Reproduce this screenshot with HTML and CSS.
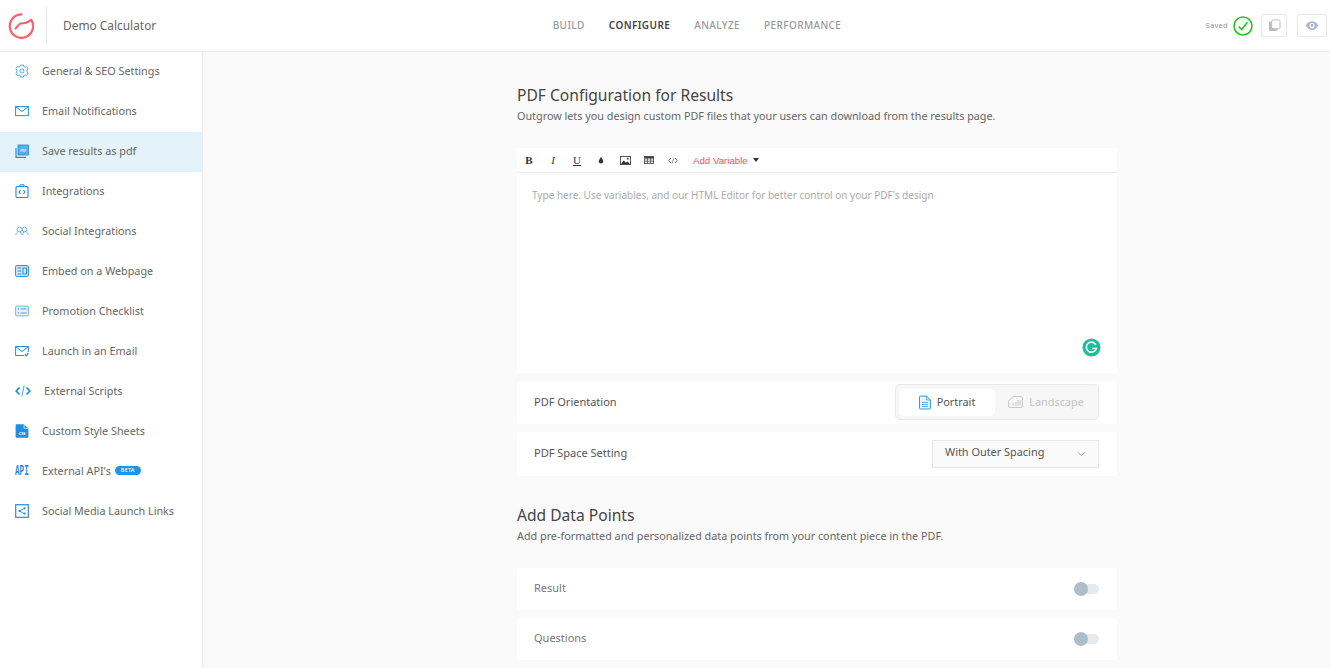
FILE: index.html
```html
<!DOCTYPE html>
<html lang="en">
<head>
<meta charset="utf-8">
<title>Demo Calculator</title>
<link rel="stylesheet" href="styles.css">
</head>
<body>
<header class="topbar">
  <div class="brand">
    <svg class="logo" viewBox="0 0 26 26" width="26" height="26"><path d="M13.500 1.400A11.700 11.700 0 1 0 23.300 6.800C21.800 7.600 19.800 9.800 17 10L12.500 10.500C10.500 11 9.300 14 7.500 15.500" fill="none" stroke="#f9616d" stroke-width="2.200" stroke-linecap="round" stroke-linejoin="round"/></svg>
    <span class="brand-name">Demo Calculator</span>
  </div>
  <nav class="tabs">
    <span class="tab">BUILD</span>
    <span class="tab tab-on">CONFIGURE</span>
    <span class="tab">ANALYZE</span>
    <span class="tab">PERFORMANCE</span>
  </nav>
  <div class="actions">
    <span class="saved">Saved</span>
    <svg viewBox="0 0 20 20" width="20" height="20"><circle cx="10" cy="10" r="9" fill="none" stroke="#1dc41d" stroke-width="1.500"/><path d="M5.800 10.600l3 3 5.600-7.400" fill="none" stroke="#1dc41d" stroke-width="1.600"/></svg>
    <span class="square sq1"><svg viewBox="0 0 14 14" width="13" height="13"><rect x="1" y="3" width="9" height="10" rx="1.500" fill="#bcbcbc"/><rect x="4" y="1" width="9" height="9.500" rx="1.500" fill="#fff" stroke="#bcbcbc"/></svg></span>
    <span class="square sq2"><svg viewBox="0 0 16 12" width="14" height="11"><path d="M8 1C4.500 1 2 3.500 .8 6 2 8.500 4.500 11 8 11s6-2.500 7.200-5C14 3.500 11.500 1 8 1z" fill="#a9b8c6"/><circle cx="8" cy="6" r="3" fill="#fff"/><circle cx="8" cy="6" r="1.700" fill="#a9b8c6"/></svg></span>
  </div>
</header>
<div class="shell">
  <aside class="sidebar">
    <a class="item"><svg class="ic" viewBox="0 0 14 14"><path d="M5.600 1h2.800l.4 1.500 1.400.6 1.500-.6 1.400 2.300-1 1.200v2l1 1.200-1.400 2.300-1.500-.6-1.400.6-.4 1.500H5.600l-.4-1.500-1.400-.6-1.500.6L.9 9.200l1-1.200V6L.9 4.800l1.400-2.300 1.500.6 1.400-.6z" fill="none" stroke="#3fa4ec" stroke-width=".9"/><circle cx="7" cy="7" r="2" fill="none" stroke="#3fa4ec" stroke-width=".9"/></svg><span>General &amp; SEO Settings</span></a>
    <a class="item"><svg class="ic" viewBox="0 0 14 14"><rect x=".6" y="2.600" width="12.800" height="9" fill="none" stroke="#1e8fe0" stroke-width="1"/><path d="M.8 2.800L7 7.500l6.200-4.700" fill="none" stroke="#1e8fe0" stroke-width="1"/></svg><span>Email Notifications</span></a>
    <a class="item item-on"><svg class="ic" viewBox="0 0 14 14"><path d="M1 4v9.300h10" fill="none" stroke="#1e8fe0" stroke-width="1.200"/><rect x="3" y="1" width="10.500" height="10" fill="#5aaeea" stroke="#1e8fe0" stroke-width=".8"/><text class="tiny" x="8.250" y="7.500" text-anchor="middle">PDF</text></svg><span>Save results as pdf</span></a>
    <a class="item"><svg class="ic" viewBox="0 0 14 14"><rect x="1" y="2.500" width="12" height="11" rx="1" fill="none" stroke="#1e8fe0" stroke-width="1.100"/><path d="M5 2.500V.8h4v1.700" fill="none" stroke="#1e8fe0"/><path d="M5.500 6.200L4 8l1.500 1.800M8.500 6.200L10 8 8.500 9.800" fill="none" stroke="#1e8fe0" stroke-width="1.100"/></svg><span>Integrations</span></a>
    <a class="item"><svg class="ic" viewBox="0 0 14 14"><circle cx="4.500" cy="5.500" r="2.300" fill="none" stroke="#3fa4ec" stroke-width=".8"/><circle cx="9.500" cy="5.500" r="2.300" fill="none" stroke="#3fa4ec" stroke-width=".8"/><path d="M.7 11c.5-2 1.500-3 2.500-3.200M6.400 11c-.2-1.500-.8-2.600-1.600-3.200M7.600 11c.2-1.500.8-2.600 1.600-3.200M13.300 11c-.5-2-1.500-3-2.500-3.200" fill="none" stroke="#3fa4ec" stroke-width=".8"/></svg><span>Social Integrations</span></a>
    <a class="item"><svg class="ic" viewBox="0 0 14 14"><rect x=".6" y="1.600" width="12.800" height="10.800" rx="1" fill="#d5ebfa" stroke="#1e8fe0" stroke-width="1"/><path d="M2.500 4h4M2.500 7h4M2.500 10h4" stroke="#1e8fe0"/><rect x="8" y="4" width="3.500" height="6" fill="none" stroke="#1e8fe0"/></svg><span>Embed on a Webpage</span></a>
    <a class="item"><svg class="ic" viewBox="0 0 14 14"><rect x=".6" y="2.100" width="12.800" height="9.800" rx="1" fill="#e4f2fc" stroke="#5db2ee" stroke-width=".9"/><path d="M2.500 5h1.500M5.500 5h6M2.500 9h1.500M5.500 9h6" stroke="#3fa4ec" stroke-width="1"/></svg><span>Promotion Checklist</span></a>
    <a class="item"><svg class="ic" viewBox="0 0 14 14"><path d="M9 11.500H.6V2.500h12.800V8" fill="none" stroke="#1e8fe0"/><path d="M.8 2.800L7 7.500l6.200-4.700" fill="none" stroke="#1e8fe0"/><path d="M9.800 10.500l1.300 1.300 2.300-2.800" fill="none" stroke="#1e8fe0" stroke-width="1.200"/></svg><span>Launch in an Email</span></a>
    <a class="item item-wide"><svg class="ic ic-wide" viewBox="0 0 16 14"><path d="M4.500 3.500L1.200 7l3.300 3.500M11.500 3.500L14.800 7l-3.300 3.500" fill="none" stroke="#1e8fe0" stroke-width="1.800"/><path d="M9.200 1.500L6.800 12.500" stroke="#1e8fe0" stroke-width=".8"/></svg><span>External Scripts</span></a>
    <a class="item"><svg class="ic" viewBox="0 0 14 14"><path d="M.6 1.200a1 1 0 0 1 1-1h7l4.800 4.400v8.200a1 1 0 0 1-1 1H1.600a1 1 0 0 1-1-1z" fill="#1e8fe0"/><path d="M9 .8v3.600h4" fill="none" stroke="#fff" stroke-width=".6"/><text class="tiny tiny-css" x="7" y="11" text-anchor="middle">CSS</text></svg><span>Custom Style Sheets</span></a>
    <a class="item"><span class="api-ic"><span class="api">API</span></span><span>External API's</span><b class="beta">BETA</b></a>
    <a class="item"><svg class="ic" viewBox="0 0 14 14"><rect x=".7" y=".7" width="12.600" height="12.600" fill="none" stroke="#1e8fe0" stroke-width="1.200"/><circle cx="4.500" cy="7" r="1.100" fill="#1e8fe0"/><circle cx="9.500" cy="4.300" r="1.100" fill="#1e8fe0"/><circle cx="9.500" cy="9.700" r="1.100" fill="#1e8fe0"/><path d="M4.500 7l5-2.700M4.500 7l5 2.700" stroke="#1e8fe0" stroke-width=".8"/></svg><span>Social Media Launch Links</span></a>
  </aside>
  <main class="main">
    <div class="col">
      <h2 class="h-first">PDF Configuration for Results</h2>
      <p class="sub">Outgrow lets you design custom PDF files that your users can download from the results page.</p>
      <section class="editor">
        <div class="toolbar">
          <b class="tool t-serif">B</b>
          <i class="tool t-serif">I</i>
          <u class="tool t-serif">U</u>
          <span class="tool"><svg viewBox="0 0 8 10" width="6" height="8"><path d="M4 .5C5 3 7 4.500 7 6.500a3 3 0 0 1-6 0C1 4.500 3 3 4 .5z" fill="#333"/></svg></span>
          <span class="tool"><svg viewBox="0 0 12 10" width="11" height="9"><rect x=".5" y=".5" width="11" height="9" fill="none" stroke="#444"/><path d="M1 9l3-4 2.500 2.500L8 6l3 3z" fill="#333"/><circle cx="8.500" cy="3" r="1" fill="#333"/></svg></span>
          <span class="tool"><svg viewBox="0 0 12 10" width="10" height="8"><rect x=".5" y=".5" width="11" height="9" fill="none" stroke="#444"/><path d="M.5 3.500h11M.5 6.500h11M4 .5v9M8 .5v9" stroke="#444"/><path d="M.5 1.500h11" stroke="#444" stroke-width="2"/></svg></span>
          <span class="tool"><svg viewBox="0 0 12 8" width="10" height="7"><path d="M3.500 1L1 4l2.500 3M8.500 1L11 4 8.500 7" fill="none" stroke="#444" stroke-width=".9"/><path d="M7 .5L5 7.500" stroke="#444" stroke-width=".7"/></svg></span>
          <span class="addvar">Add Variable</span><span class="caret"></span>
        </div>
        <div class="editor-body">
          <p class="placeholder">Type here. Use variables, and our HTML Editor for better control on your PDF's design</p>
          <svg class="grammarly" viewBox="0 0 20 20" width="19" height="19"><circle cx="10" cy="10" r="9.500" fill="#15c39a"/><path d="M14.600 7.300A5.300 5.300 0 1 0 15 11h-4.200" fill="none" stroke="#fff" stroke-width="1.700"/></svg>
        </div>
      </section>
      <div class="row row-orient">
        <span class="label">PDF Orientation</span>
        <div class="switcher">
          <span class="opt opt-on"><svg viewBox="0 0 12 14" width="12" height="15"><path d="M1.500.6h6l3.900 3.900v8a1 1 0 0 1-1 1h-8.900a1 1 0 0 1-1-1v-11a1 1 0 0 1 1-.9z" fill="#e9f4fc" stroke="#2d9ae8"/><path d="M7.500.6v3.900h3.900M3 7h6M3 9h6M3 11h6" fill="none" stroke="#2d9ae8" stroke-width=".8"/></svg><span class="opt-text">Portrait</span></span>
          <span class="opt opt-off"><svg viewBox="0 0 15 12" width="15" height="12"><path d="M5 .6h8a1.400 1.400 0 0 1 1.400 1.400v8a1.400 1.400 0 0 1-1.400 1.400H2A1.400 1.400 0 0 1 .6 10V5z" fill="none" stroke="#c5c5c5"/><path d="M8 6v3.500M10 4v5.500M12 4v5.500M5 7v2.500" stroke="#c5c5c5"/></svg><span class="opt-text">Landscape</span></span>
        </div>
      </div>
      <div class="row row-space">
        <span class="label">PDF Space Setting</span>
        <div class="select"><span class="select-text">With Outer Spacing</span><svg viewBox="0 0 10 6" width="9" height="6"><path d="M1 1l4 4 4-4" fill="none" stroke="#a5a5a5" stroke-width="1.100"/></svg></div>
      </div>
      <h2 class="h-second">Add Data Points</h2>
      <p class="sub">Add pre-formatted and personalized data points from your content piece in the PDF.</p>
      <div class="row row-toggle row-result"><span class="label label-soft">Result</span><span class="toggle"></span></div>
      <div class="row row-toggle"><span class="label label-soft">Questions</span><span class="toggle"></span></div>
    </div>
  </main>
</div>
</body>
</html>
```
FILE: styles.css
```css
* { box-sizing: border-box; }
html, body { margin: 0; height: 100%; overflow: hidden; }
body { font-family: "Noto Sans", "Open Sans", sans-serif; background: #fafafa; color: #555; }

.topbar { height: 52px; background: #fff; border-bottom: 1px solid #e9e9e9; display: grid; grid-template-columns: 1fr auto 1fr; align-items: center; }
.brand { display: flex; align-items: center; height: 100%; padding-left: 8px; }
.logo { display: block; }
.brand-name { margin-left: 12px; padding-left: 16px; border-left: 1px solid #e8e8e8; height: 37px; line-height: 37px; font-size: 11.900px; color: #666; }
.tabs { display: flex; gap: 24px; font-size: 10px; letter-spacing: .4px; font-weight: 500; color: #999; padding-left: 64px; margin-bottom: 2px; }
.tab-on { color: #444; font-weight: 600; }
.actions { display: flex; justify-content: flex-end; align-items: center; padding-right: 3px; }
.saved { font-size: 7.500px; color: #999; letter-spacing: .3px; margin-right: 5px; margin-bottom: 2px; }
.square { width: 26px; height: 23px; border: 1px solid #e8e8e8; border-radius: 2px; display: flex; align-items: center; justify-content: center; }
.sq1 { margin-left: 8px; }
.sq2 { margin-left: 10px; width: 30px; }

.shell { display: flex; height: 616px; }
.sidebar { width: 203px; flex: none; background: #fff; border-right: 1px solid #ececec; }
.item { display: flex; align-items: center; height: 40px; padding: 0 0 2px 15px; font-size: 10.800px; color: #666; }
.item span { margin-bottom: 2px; }
.item-on { background: #e4f2fa; }
.ic { width: 14px; height: 14px; margin-right: 13px; flex: none; }
.ic-wide { width: 16px; margin-right: 13px; }
.tiny { font-size: 3.200px; font-weight: 700; fill: #e4f2fa; }
.tiny-css { font-size: 3.800px; fill: #fff; }
.item .api-ic { width: 14px; height: 14px; margin: 0 13px 0 0; flex: none; display: block; line-height: 14px; }
.item .api { display: block; margin: 0; width: 26px; font-family: "Liberation Mono", monospace; font-size: 14px; font-weight: 700; color: #1e8fe0; transform: scaleX(.55); transform-origin: left center; }
.beta { margin: 0 0 2px 4px; background: #1e96e6; color: #fff; font-size: 5.500px; font-weight: 500; border-radius: 5px; padding: 1.500px 6px; line-height: 6px; letter-spacing: .2px; }

.main { flex: 1; display: flex; padding-left: 314px; }
.col { width: 600px; }
h2 { margin: 0; font-size: 15.600px; font-weight: 400; color: #444; line-height: 20px; }
.h-first { margin-top: 33px; }
.h-second { margin-top: 29px; }
.sub { margin: 3px 0 0; font-size: 10.800px; line-height: 16px; color: #666; }

.editor { margin-top: 24px; background: #fff; height: 225px; display: flex; flex-direction: column; }
.toolbar { height: 25px; border-bottom: 1px solid #ececec; display: flex; align-items: center; padding-left: 0; }
.tool { width: 24px; display: flex; justify-content: center; font-size: 10px; color: #333; line-height: 10px; }
.t-serif { font-family: "Liberation Serif", serif; font-size: 11px; }
.addvar { margin-left: 8px; font-family: "Liberation Sans", sans-serif; font-size: 9.700px; color: #ff4b63; }
.caret { margin-left: 5px; border: 3.500px solid transparent; border-top: 4px solid #333; border-bottom: 0; }
.editor-body { flex: 1; position: relative; padding: 15px; }
.placeholder { margin: 0; font-size: 10.030px; line-height: 14px; color: #aaa; }
.grammarly { position: absolute; right: 16px; bottom: 16px; }

.row { background: #fff; display: flex; align-items: center; justify-content: space-between; padding: 0 18px 0 17px; border-radius: 3px; }
.label { font-size: 11px; color: #555; margin-bottom: 3px; }
.label-soft { color: #777; }
.row-orient { margin-top: 8px; height: 43px; }
.row-space { margin-top: 8px; height: 44px; }
.switcher { background: #f7f7f7; border: 1px solid #e8e8e8; border-radius: 5px; height: 36px; width: 204px; display: flex; align-items: center; padding: 0 1px 0 3px; margin-bottom: 1px; }
.opt { display: flex; align-items: center; justify-content: center; gap: 6px; font-size: 10.900px; height: 27px; }
.opt-text { margin-bottom: 2px; }
.opt-on { width: 96px; background: #fff; border-radius: 5px; color: #555; }
.opt-off { flex: 1; color: #c4c4c4; }
.select { width: 167px; height: 28px; background: #fafafa; border: 1px solid #e8e8e8; display: flex; align-items: center; justify-content: space-between; padding: 0 12px; font-size: 10.900px; color: #555; }
.select-text { margin-bottom: 5px; }
.row-toggle { height: 42px; }
.row-result { margin-top: 24px; }
.row-result + .row-toggle { margin-top: 8px; }
.toggle { width: 25px; height: 10px; border-radius: 5px; background: #e5eaee; position: relative; }
.toggle::before { content: ""; position: absolute; left: 0; top: -2px; width: 14px; height: 14px; border-radius: 50%; background: #aebdca; }
```
